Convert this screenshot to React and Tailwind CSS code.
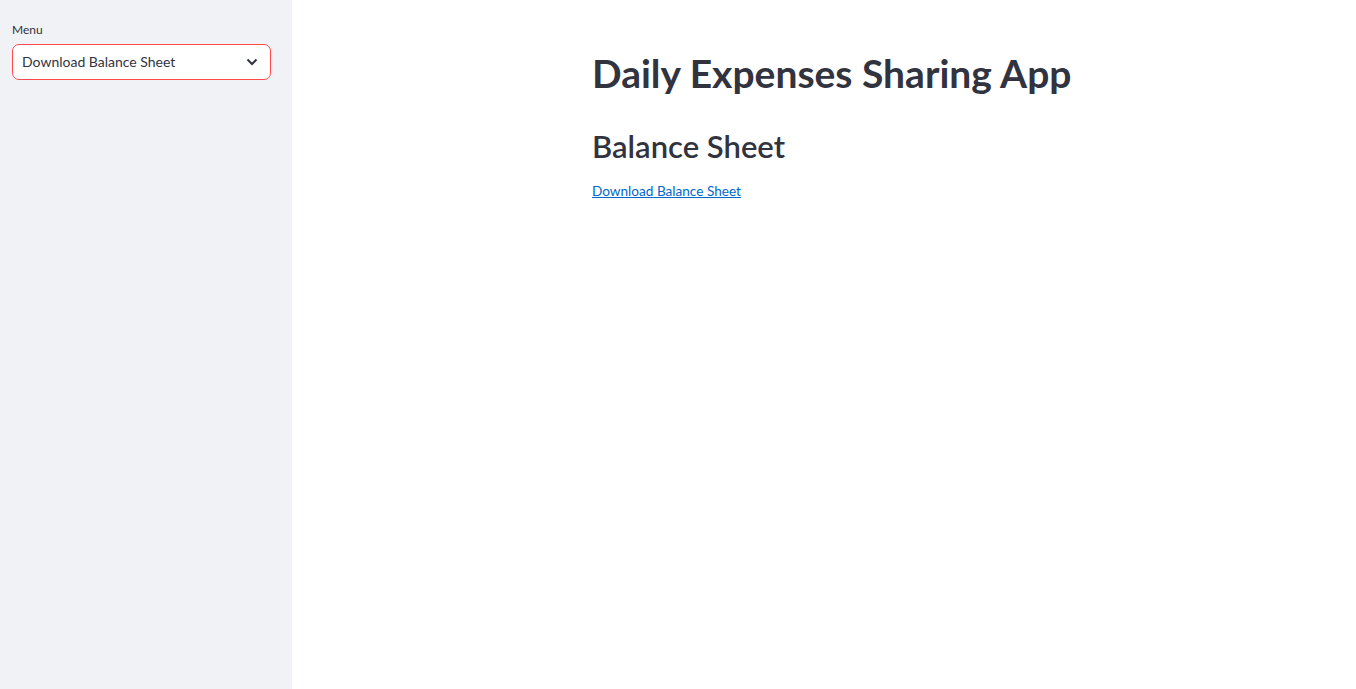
import React, { useState } from 'react';

function App() {
  const [page] = useState('Download Balance Sheet');

  return (
    <div className="flex min-h-screen bg-white text-[#31333f] font-['Lato','Noto_Sans',sans-serif]">
      {/* Sidebar */}
      <aside className="w-[292px] shrink-0 bg-[#f0f2f6] pl-3 pr-[21px] pt-[22px]">
        <label className="block text-[12px] leading-[16px] mb-[6px]">Menu</label>
        <div className="flex items-center justify-between h-[36px] rounded-[7px] border border-[#ff4b4b] bg-white pl-[9px] pr-[12px]">
          <span className="text-[14px] leading-[20px] -mt-[1px]">{page}</span>
          <svg width="12" height="8" viewBox="0 0 12 8" className="text-[#31333f]">
            <path d="M1.5 1.5 L6 6 L10.5 1.5" fill="none" stroke="currentColor" strokeWidth="2" />
          </svg>
        </div>
      </aside>

      {/* Main Content */}
      <main className="flex-1 pl-[300px] pt-[48px]">
        <h1 className="text-[39px] leading-[50px] font-bold">Daily Expenses Sharing App</h1>
        <h2 className="text-[31px] leading-[40px] font-semibold mt-[28px]">Balance Sheet</h2>
        <a href="#" className="inline-block mt-[15px] text-[13.6px] leading-[21px] text-[#0068c9] underline">Download Balance Sheet</a>
      </main>
    </div>
  );
}

export default App;
